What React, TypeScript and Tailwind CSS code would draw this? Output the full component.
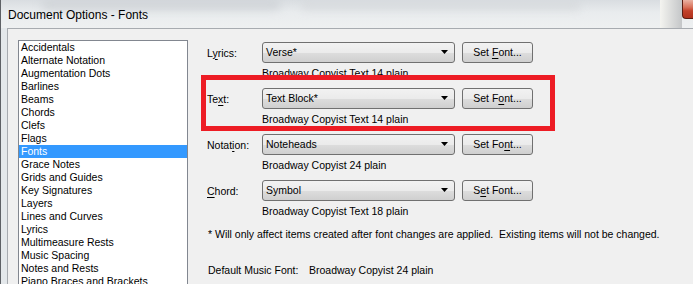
import React from "react";

const items = [
  "Accidentals",
  "Alternate Notation",
  "Augmentation Dots",
  "Barlines",
  "Beams",
  "Chords",
  "Clefs",
  "Flags",
  "Fonts",
  "Grace Notes",
  "Grids and Guides",
  "Key Signatures",
  "Layers",
  "Lines and Curves",
  "Lyrics",
  "Multimeasure Rests",
  "Music Spacing",
  "Notes and Rests",
  "Piano Braces and Brackets",
];

function U({ children }: { children: React.ReactNode }) {
  return <span className="underline underline-offset-[2px] decoration-[1px]">{children}</span>;
}

function Row({
  label,
  value,
  button,
  desc,
}: {
  label: React.ReactNode;
  value: string;
  button: React.ReactNode;
  desc: string;
}) {
  return (
    <div className="flex flex-col mb-[8px]">
      <div className="flex items-center h-[21px]">
        <div className="w-[55px] pt-[1px]">{label}</div>
        <div className="w-[193px] h-[21px] border border-[#707070] rounded-[3px] bg-[linear-gradient(to_bottom,#f2f2f2_0%,#ebebeb_50%,#dddddd_51%,#cfcfcf_100%)] flex items-center pl-[3px] pr-[5px]">
          <span className="flex-1">{value}</span>
          <svg width="8" height="5" viewBox="0 0 8 5">
            <path d="M0 0 H7 L3.5 4 Z" fill="#000" />
          </svg>
        </div>
        <div className="ml-[7px] w-[71px] h-[21px] border border-[#707070] rounded-[3px] bg-[linear-gradient(to_bottom,#f2f2f2_0%,#ebebeb_50%,#dddddd_51%,#cfcfcf_100%)] flex items-center justify-center">
          {button}
        </div>
      </div>
      <div className="pl-[55px] mt-[4px] h-[13px] leading-[13px]">{desc}</div>
    </div>
  );
}

export default function App() {
  return (
    <div
      className="relative w-[693px] h-[284px] overflow-hidden bg-[#e4e8eb] text-black text-[10.5px] leading-[13px] border-l border-[#5e6166]"
      style={{ fontFamily: '"Liberation Sans", Arial, sans-serif' }}
    >
      {/* Title bar */}
      <div className="relative h-[28px] flex items-center pl-[7px] bg-[linear-gradient(to_bottom,#d9dde1_0%,#e9ecee_45%,#eef0f1_100%)]">
        <div className="absolute left-[40px] top-0 w-[240px] h-[10px] rounded-full bg-[#c9cdd1] blur-[5px] opacity-70" />
        <div className="absolute left-[300px] top-[2px] w-[280px] h-[8px] rounded-full bg-[#d2d5d8] blur-[5px] opacity-70" />
        <div className="absolute right-[11px] top-0 w-[22px] h-[28px] bg-[linear-gradient(to_right,#f4f4f0,#c4c6c8)]" />
        <span className="relative text-[12px] text-black pt-[2px]">Document Options - Fonts</span>
      </div>
      <div className="absolute right-0 top-0 w-[11px] h-[19px] rounded-bl-[4px] border-l border-b border-[#5a1d12] bg-[linear-gradient(to_bottom,#eab2a3_0%,#d8715a_40%,#c2412a_60%,#b0311c_100%)]" />

      {/* Client area */}
      <div className="ml-[6px] h-[256px] border-l border-t border-[#a7abb0] bg-[#f0f0f0] flex">
        {/* List */}
        <div className="ml-[10px] mt-[11px] w-[170px] h-[260px] bg-white border border-[#828790] flex flex-col">
          {items.map((it) => (
            <div
              key={it}
              className={
                "h-[13px] leading-[13px] pl-[2px] shrink-0 whitespace-nowrap " +
                (it === "Fonts" ? "bg-[#3399ff] text-white" : "")
              }
            >
              {it}
            </div>
          ))}
        </div>

        {/* Right panel */}
        <div className="ml-[19px] pt-[13px] flex flex-col">
          <Row
            label={<>L<U>y</U>rics:</>}
            value="Verse*"
            button={<span>Set <U>F</U>ont...</span>}
            desc="Broadway Copyist Text 14 plain"
          />
          <Row
            label={<>Te<U>x</U>t:</>}
            value="Text Block*"
            button={<span>Set F<U>o</U>nt...</span>}
            desc="Broadway Copyist Text 14 plain"
          />
          <Row
            label={<>Notat<U>i</U>on:</>}
            value="Noteheads"
            button={<span>Set Fo<U>n</U>t...</span>}
            desc="Broadway Copyist 24 plain"
          />
          <Row
            label={<><U>C</U>hord:</>}
            value="Symbol"
            button={<span>S<U>e</U>t Font...</span>}
            desc="Broadway Copyist Text 18 plain"
          />
          <div className="mt-[2px] pl-[1px] h-[13px] whitespace-nowrap">
            * Will only affect items created after font changes are applied.&nbsp; Existing items will not be changed.
          </div>
          <div className="mt-[23px] pl-[1px] h-[13px] flex whitespace-nowrap">
            <span className="w-[101px]">Default Music Font:</span>
            <span>Broadway Copyist 24 plain</span>
          </div>
        </div>
      </div>

      {/* Red annotation box */}
      <div className="absolute left-[200px] top-[75px] w-[354px] h-[56px] border-[5px] border-[#ed1c24]" />
    </div>
  );
}
